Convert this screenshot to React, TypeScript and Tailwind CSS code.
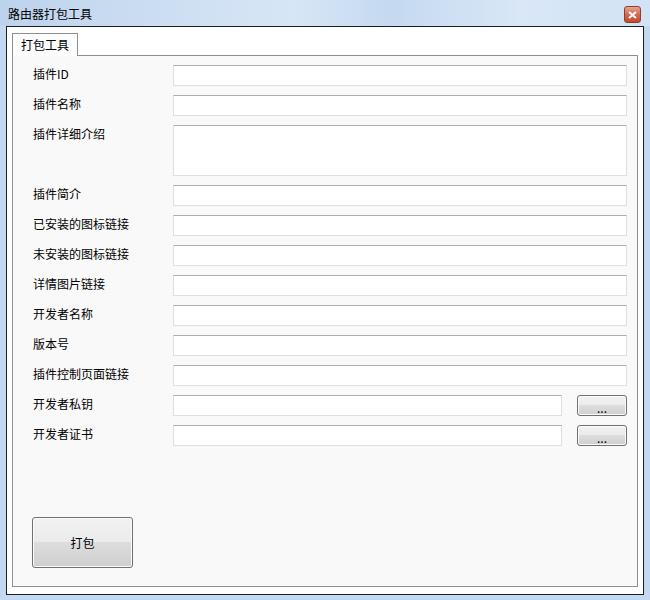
import React from 'react';

const font = { fontFamily: '"Microsoft YaHei", "Noto Sans CJK SC", "Liberation Sans", sans-serif' };

const fields: { label: string; tall?: boolean; browse?: boolean }[] = [
    { label: '插件ID' },
    { label: '插件名称' },
    { label: '插件详细介绍', tall: true },
    { label: '插件简介' },
    { label: '已安装的图标链接' },
    { label: '未安装的图标链接' },
    { label: '详情图片链接' },
    { label: '开发者名称' },
    { label: '版本号' },
    { label: '插件控制页面链接' },
    { label: '开发者私钥', browse: true },
    { label: '开发者证书', browse: true },
];

const WinButton: React.FC<{ className: string; children: React.ReactNode }> = ({ className, children }) => (
    <button
        className={`rounded-[3px] border border-[#707070] bg-[linear-gradient(to_bottom,#f2f2f2_0%,#ebebeb_49%,#dddddd_50%,#cfcfcf_100%)] text-[12px] text-black shadow-[inset_0_0_0_1px_#fbfbfb] ${className}`}
    >
        {children}
    </button>
);

const Row: React.FC<{ label: string; tall?: boolean; browse?: boolean }> = ({ label, tall, browse }) => (
    <div className="flex items-start">
        <div className="w-[140px] shrink-0 pt-[1px] text-[12px] leading-[16px] text-black">{label}</div>
        <div
            className={`${browse ? 'w-[389px]' : 'w-[454px]'} ${tall ? 'h-[51px]' : 'h-[21px]'} border border-[#dbdfe6] border-t-[#abadb3] bg-white`}
        />
        {browse && (
            <WinButton className="ml-[15px] flex h-[21px] w-[50px] items-end justify-center pb-[2px] leading-[10px]">
                ...
            </WinButton>
        )}
    </div>
);

export default function App() {
    return (
        <div className="flex h-[600px] w-[650px] flex-col bg-[#c3d9f1]" style={font}>
            {/* title bar */}
            <div className="relative flex h-[26px] shrink-0 items-center bg-[linear-gradient(to_right,#bdd3ec_0%,#cfe0f3_30%,#d7e6f6_45%,#c4d9f0_60%,#d9e7f7_80%,#d2e3f5_100%)] pl-[8px] pt-[1px] text-[12px] text-black">
                路由器打包工具
                <div className="absolute right-[9px] top-[6px] flex h-[17px] w-[17px] items-center justify-center rounded-[3px] border border-[#8a4030] bg-[linear-gradient(to_bottom,#e9a48e_0%,#d46a4e_50%,#c24a2e_100%)]">
                    <svg width="9" height="8" viewBox="0 0 9 8">
                        <path d="M1 1 L8 7 M8 1 L1 7" stroke="#ffffff" strokeWidth="2" />
                    </svg>
                </div>
            </div>

            {/* client area */}
            <div className="mx-[6px] mb-[5px] flex flex-1 flex-col border border-[#1b1f24] bg-white px-[5px] pb-[7px] pt-[6px]">
                <div className="flex">
                    <div className="relative z-10 -mb-px flex h-[23px] w-[66px] items-center justify-center border border-b-0 border-[#8e8f8f] bg-[#fcfcfc] text-[12px] text-black">
                        打包工具
                    </div>
                </div>
                <div className="flex flex-1 flex-col border border-[#8e8f8f] bg-[#f9f9f9] pl-[20px] pt-[9px]">
                    <div className="flex flex-col gap-[9px]">
                        {fields.map((f) => (
                            <Row key={f.label} {...f} />
                        ))}
                    </div>
                    <WinButton className="-ml-px mt-[71px] flex h-[51px] w-[101px] items-center justify-center">
                        打包
                    </WinButton>
                </div>
            </div>
        </div>
    );
}
